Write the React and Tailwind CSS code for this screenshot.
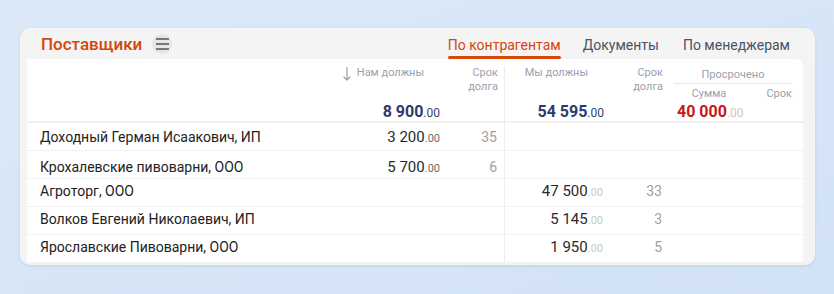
import React from "react";

const font = { fontFamily: "Roboto, 'Noto Sans', sans-serif" };

function Money({ int, cls = "text-[#2a2a2a]", dec = "text-[#6b6b6b]", decSize = "text-[11px]" }) {
  return (
    <span className={cls}>
      {int}
      <span className={`${decSize} ${dec}`}>.00</span>
    </span>
  );
}

const rows = [
  { name: "Доходный Герман Исаакович, ИП", a: "3 200", ad: "35", pad: "pt-[4px]" },
  { name: "Крохалевские пивоварни, ООО", a: "5 700", ad: "6", pad: "pt-[6px]" },
  { name: "Агроторг, ООО", b: "47 500", bd: "33", pad: "pt-[2px]" },
  { name: "Волков Евгений Николаевич, ИП", b: "5 145", bd: "3", pad: "pt-[2px]" },
  { name: "Ярославские Пивоварни, ООО", b: "1 950", bd: "5", pad: "pt-[2px]" },
];

function Arrow() {
  return (
    <svg width="8" height="14" viewBox="0 0 8 14" className="mr-[6px] mt-[1px] shrink-0">
      <path d="M4 0.5 V13 M1 10 L4 13 L7 10" fill="none" stroke="#9aa1ad" strokeWidth="1.2" strokeLinecap="round" strokeLinejoin="round" />
    </svg>
  );
}

export default function App() {
  return (
    <div style={font} className="w-[834px] h-[294px] bg-gradient-to-br from-[#dce9f8] to-[#d2e2f6] pt-[28px] pl-[20px]">
      <div className="w-[795px] h-[237px] rounded-[10px] bg-[#f4f4f4] shadow-[0_1px_3px_rgba(80,110,160,0.15)] flex flex-col">
        {/* header */}
        <div className="h-[31px] flex items-start">
          <div className="flex items-center pl-[21px] pt-[5px]">
            <span className="text-[17px] leading-[22px] font-medium text-[#d4460e]">Поставщики</span>
            <span className="ml-[10px] w-[20px] h-[20px] rounded-full bg-[#e6e6e6] flex flex-col items-center justify-center gap-[3.5px]">
              <span className="block w-[13px] h-[1.5px] bg-[#777]" />
              <span className="block w-[13px] h-[1.5px] bg-[#777]" />
              <span className="block w-[13px] h-[1.5px] bg-[#777]" />
            </span>
          </div>
          <div className="ml-auto mr-[25px] flex text-[14px] leading-[20px]">
            <div className="flex flex-col pt-[7px]">
              <span className="text-[#d4460e]">По контрагентам</span>
              <span className="mt-[1px] h-[3px] rounded-full bg-[#d84a0c]" />
            </div>
            <div className="ml-[22px] pt-[7px] text-[#4a5263]">Документы</div>
            <div className="ml-[24px] pt-[7px] text-[#4a5263]">По менеджерам</div>
          </div>
        </div>
        {/* panel */}
        <div className="ml-[7px] mr-[12px] h-[204px] bg-white rounded-tr-[8px] flex flex-col overflow-hidden">
          {/* table header */}
          <div className="h-[64px] shrink-0 pt-[7px] border-b-2 border-[#f1f1f1] flex text-[11px] leading-[14px] text-[#9aa1ad] whitespace-nowrap">
            <div className="w-[313px]" />
            <div className="w-[108px] flex flex-col items-end">
              <div className="flex items-start pr-[24px]">
                <Arrow />
                <span>Нам должны</span>
              </div>
              <div className="mt-auto pr-[8px] text-[16px] leading-[16px] font-bold">
                <Money int="8 900" cls="text-[#2e3a6e]" dec="font-normal text-[#3a4470]" decSize="text-[12px]" />
              </div>
            </div>
            <div className="w-[56px] pr-[6px] text-right">
              Срок
              <br />
              долга
            </div>
            <div className="w-[108px] border-l border-[#ececec] flex flex-col items-end">
              <div className="pr-[24px]">Мы должны</div>
              <div className="mt-auto pr-[8px] text-[16px] leading-[16px] font-bold">
                <Money int="54 595" cls="text-[#2e3a6e]" dec="font-normal text-[#3a4470]" decSize="text-[12px]" />
              </div>
            </div>
            <div className="w-[58px] pr-[7px] text-right">
              Срок
              <br />
              долга
            </div>
            <div className="w-[4px]" />
            <div className="w-[118px] flex flex-col">
              <div className="pt-[2px] pb-[1px] border-b border-[#e8e8e8] text-center">Просрочено</div>
              <div className="mt-[3px] flex">
                <div className="w-[74px] pr-[4px] text-center">Сумма</div>
                <div className="flex-1 text-right">Срок</div>
              </div>
              <div className="mt-auto pl-[3px] text-[16px] leading-[16px] font-bold">
                <Money int="40 000" cls="text-[#c8171c]" dec="font-normal text-[#c8c8c8]" decSize="text-[12px]" />
              </div>
            </div>
          </div>
          {/* rows */}
          {rows.map((r, i) => (
            <div key={i} className={`h-[28px] shrink-0 flex border-b border-[#f1f1f1] text-[14px] leading-[20px] whitespace-nowrap ${r.pad}`}>
              <div className="w-[313px] pl-[13px] text-[#222]">{r.name}</div>
              <div className="w-[108px] pr-[8px] text-right text-[15px]">
                {r.a && <Money int={r.a} />}
              </div>
              <div className="w-[56px] pr-[7px] text-right text-[#a0a0a0]">{r.ad}</div>
              <div className="w-[108px] -mt-[8px] pt-[8px] border-l border-[#ececec] pr-[9px] text-right text-[15px]">
                {r.b && <Money int={r.b} cls="text-[#2a2a2a]" dec="text-[#c8c8c8]" />}
              </div>
              <div className="w-[58px] pr-[8px] text-right text-[#a0a0a0]">{r.bd}</div>
            </div>
          ))}
        </div>
      </div>
    </div>
  );
}
